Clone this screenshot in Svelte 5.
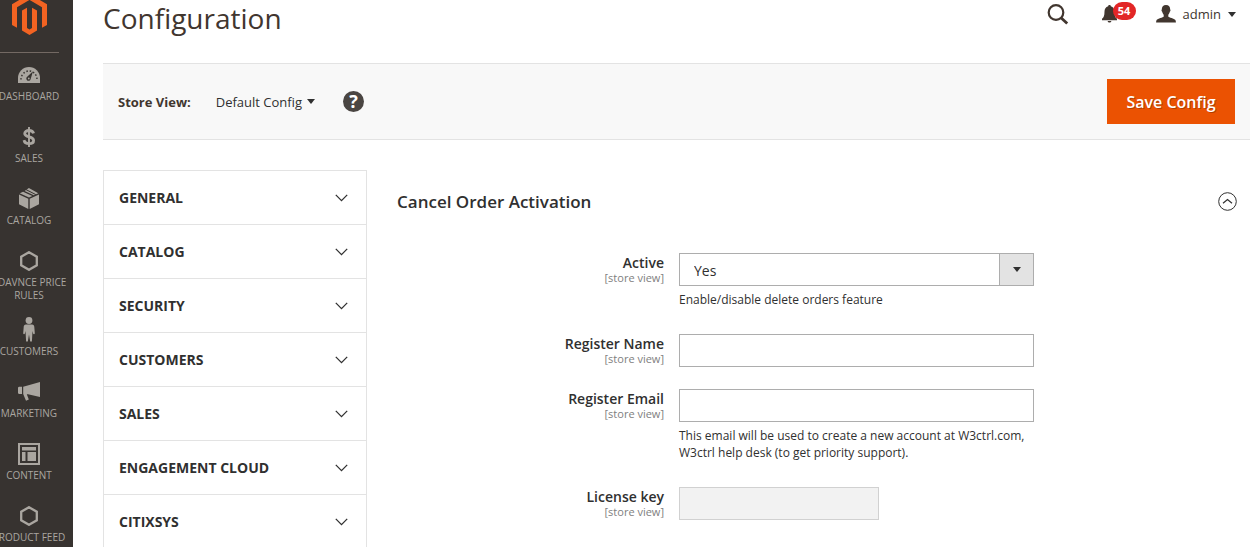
<script lang="ts">
	type MenuItem = { icon: string; label: string };

	const menu: MenuItem[] = [
		{ icon: 'dashboard', label: 'Dashboard' },
		{ icon: 'sales', label: 'Sales' },
		{ icon: 'catalog', label: 'Catalog' },
		{ icon: 'hexagon', label: 'Adavnce Price Rules' },
		{ icon: 'customers', label: 'Customers' },
		{ icon: 'marketing', label: 'Marketing' },
		{ icon: 'content', label: 'Content' },
		{ icon: 'hexagon', label: 'Product Feed' }
	];

	const sections = [
		'General',
		'Catalog',
		'Security',
		'Customers',
		'Sales',
		'Engagement Cloud',
		'Citixsys'
	];

	let active = $state('Yes');
	let registerName = $state('');
	let registerEmail = $state('');
	let isOpen = $state(true);
</script>

{#snippet scopeLabel(id: string, text: string)}
	<label for={id}>
		{text}
		<small>[store view]</small>
	</label>
{/snippet}

<div class="page">
	<aside class="sidebar">
		<a href="#home" class="logo" aria-label="Magento Admin Panel">
			<svg width="35" height="35" viewBox="0 6 35 35">
				<path d="M17.5 0 0 10.200V31l5 2.800V13.200L17.500 5.900 30 13.200V33.800L35 31V10.200z" />
				<path d="M10 16.500 15 13.700V34l2.500 1.500L20 34V13.700l5 2.800V36.600L17.500 41 10 36.600z" />
			</svg>
		</a>
		<nav>
			<ul class="menu">
				{#each menu as item}
					<li>
						<a href="#menu">
							<span class="menu-icon">
								{#if item.icon === 'dashboard'}
									<svg width="22" height="16" viewBox="0 0 22 16">
										<path fill="currentColor" d="M0 16v-5a11 11 0 0 1 22 0v5z" />
										<path
											fill="none"
											stroke="#373330"
											stroke-width="1.500"
											stroke-dasharray="1.500 1.900"
											d="M3 12.500a8 8.500 0 0 1 16 0"
										/>
										<path fill="#373330" d="m15 4.200-5.800 5.600a2.200 2.200 0 1 0 3.400 2.400z" />
										<circle cx="10.800" cy="11.500" r=".9" fill="currentColor" />
									</svg>
								{:else if item.icon === 'sales'}
									<svg width="14" height="20" viewBox="0 0 14 20">
										<path
											fill="none"
											stroke="currentColor"
											stroke-width="2.800"
											d="M11.600 6.400C11 4.400 9.300 3.500 7 3.500c-2.600 0-4.300 1.200-4.300 3.100 0 4.500 8.900 2.200 8.900 6.800 0 2-1.900 3.200-4.600 3.200-2.600 0-4.500-1.100-5-3.500"
										/>
										<path fill="none" stroke="currentColor" stroke-width="1.900" d="M7 0v20" />
									</svg>
								{:else if item.icon === 'catalog'}
									<svg width="20" height="21" viewBox="0 0 20 21" fill="currentColor">
										<path d="M0 6.500 9.300 10.800V21L0 16.200zM20 6.500 10.700 10.800V21L20 16.200z" />
										<path d="M.7 5.300 4.100 3.700 13.300 8 10 9.600zM5.600 3 9.900 0l9.400 5.300-4.500 2z" />
										<path d="m7 1.600 9.800 5" stroke="#373330" stroke-width="1" />
									</svg>
								{:else if item.icon === 'customers'}
									<svg width="12" height="25" viewBox="0 0 12 25" fill="currentColor">
										<circle cx="6" cy="3.500" r="3.400" />
										<path
											d="M3 7.600h6c1.600 0 2.200 1 2.300 2.500l.5 6.200c0 1-1.300 1.200-1.700.3L9.500 14 8.900 24.500H7.200L6 17.500l-1.200 7H3.100L2.500 14l-.6 2.600c-.4.9-1.700.7-1.700-.3l.5-6.200C.8 8.600 1.400 7.600 3 7.600z"
										/>
									</svg>
								{:else if item.icon === 'marketing'}
									<svg width="22" height="19" viewBox="0 0 22 19" fill="currentColor">
										<path
											d="M22 0v15L10 12.200l-1.200.1 2 5.200-2.800 1.200L5.200 12V4.800zM0 5.600l1-.9h3v7.400H1l-1-.9z"
										/>
									</svg>
								{:else if item.icon === 'content'}
									<svg width="22" height="22" viewBox="0 0 22 22" fill="currentColor">
										<path
											fill-rule="evenodd"
											d="M0 0h22v22H0zM2 2v18h18V2zM4 4h14v3.500H4zM4 9h3.500v9H4zM9.500 9H18v9H9.500z"
										/>
									</svg>
								{:else}
									<svg width="18" height="20" viewBox="0 0 18 20">
										<path
											fill="none"
											stroke="currentColor"
											stroke-width="2.300"
											d="m9 1.200 7.800 4.500v8.600L9 18.800l-7.800-4.500V5.700z"
										/>
									</svg>
								{/if}
							</span>
							<span>{item.label}</span>
						</a>
					</li>
				{/each}
			</ul>
		</nav>
	</aside>

	<main>
		<header>
			<h1>Configuration</h1>
			<div class="header-tools">
				<button class="search" aria-label="Search">
					<svg width="22" height="21" viewBox="0 0 22 21" fill="none" stroke="currentColor">
						<circle cx="9" cy="8.500" r="7.300" stroke-width="2.200" />
						<path stroke-width="2.800" d="m14 13.700 6.200 5.800" />
					</svg>
				</button>
				<button class="notifications" aria-label="Notifications">
					<svg width="15" height="18" viewBox="0 0 15 18" fill="currentColor">
						<path
							d="M7.500 0c.8 0 1.300.5 1.300 1.300 2.500.6 3.700 2.700 3.700 5.200 0 4.200.8 6.200 2.500 7.200v1.500H0v-1.500c1.700-1 2.500-3 2.500-7.200 0-2.500 1.200-4.600 3.700-5.200C6.200.5 6.700 0 7.500 0zM5.600 16h3.800c-.3 1-1 1.500-1.900 1.500S5.900 17 5.600 16z"
						/>
					</svg>
					<span class="counter">54</span>
				</button>
				<button class="account">
					<svg width="20" height="18" viewBox="0 0 20 18" fill="currentColor">
						<path
							d="M10 0c2.800 0 4.300 1.800 4.200 4.500.6.600.2 1.900-.4 2.200-.3 1.500-1 2.300-1.500 3v1.700c.5 1.200 6 1.800 7.100 3.500.4.700.5 1.800.5 2.700H.1c0-.9.1-2 .5-2.700 1.100-1.700 6.600-2.300 7.100-3.500V9.700c-.5-.7-1.200-1.500-1.500-3-.6-.3-1-1.600-.4-2.200C5.700 1.800 7.200 0 10 0z"
						/>
					</svg>
					<span>admin</span>
					<i class="caret"></i>
				</button>
			</div>
		</header>

		<div class="toolbar">
			<strong>Store View:</strong>
			<button class="store-switcher">Default Config <i class="caret"></i></button>
			<a href="#help" class="help" aria-label="What is this?">?</a>
			<button class="save">Save Config</button>
		</div>

		<div class="columns">
			<nav class="sections">
				{#each sections as section}
					<button>
						{section}
						<svg width="13" height="8" viewBox="0 0 13 8">
							<path fill="none" stroke="#303030" stroke-width="1.300" d="m.8.900 5.700 5.700L12.200.900" />
						</svg>
					</button>
				{/each}
			</nav>

			<section class="config">
				<div class="config-title">
					<h2>Cancel Order Activation</h2>
					<button
						aria-label="Toggle section"
						aria-expanded={isOpen}
						onclick={() => (isOpen = !isOpen)}
					>
						<svg width="19" height="19" viewBox="0 0 19 19" fill="none" stroke="#303030">
							<circle cx="9.500" cy="9.500" r="8.800" />
							<path d="m5 11.200 4.500-3.700 4.500 3.700" stroke-width="1.200" />
						</svg>
					</button>
				</div>

				{#if isOpen}
					<form>
						<div class="field">
							{@render scopeLabel('active', 'Active')}
							<div class="control">
								<div class="select">
									<select id="active" bind:value={active}>
										<option>Yes</option>
										<option>No</option>
									</select>
									<span class="select-arrow"><i class="caret"></i></span>
								</div>
								<p>Enable/disable delete orders feature</p>
							</div>
						</div>
						<div class="field">
							{@render scopeLabel('register-name', 'Register Name')}
							<div class="control">
								<input id="register-name" type="text" bind:value={registerName} />
							</div>
						</div>
						<div class="field">
							{@render scopeLabel('register-email', 'Register Email')}
							<div class="control">
								<input id="register-email" type="text" bind:value={registerEmail} />
								<p>
									This email will be used to create a new account at W3ctrl.com, W3ctrl help desk (to
									get priority support).
								</p>
							</div>
						</div>
						<div class="field">
							{@render scopeLabel('license-key', 'License key')}
							<div class="control">
								<input id="license-key" class="license" type="text" disabled />
							</div>
						</div>
					</form>
				{/if}
			</section>
		</div>
	</main>
</div>

<style>
	:global(body) {
		background: #fff;
		margin: 0;
	}

	.page {
		color: #303030;
		display: flex;
		font-family: 'Open Sans', 'Noto Sans', sans-serif;
		font-size: 14px;
		height: 100vh;
		overflow: hidden;
	}

	.page :global(*) {
		box-sizing: border-box;
	}

	svg {
		display: block;
		flex: none;
	}

	button {
		background: none;
		border: none;
		color: inherit;
		cursor: pointer;
		font: inherit;
		padding: 0;
	}

	/* the menu is scrolled a little to the left */
	.sidebar {
		background: #373330;
		flex: none;
		margin-left: -15px;
		width: 88px;
	}

	.logo {
		border-bottom: 1px solid #736963;
		display: flex;
		fill: #f26322;
		height: 53px;
		justify-content: center;
		margin: 0 14px;
	}

	.menu {
		list-style: none;
		margin: 0;
		padding: 0;
	}

	.menu a {
		align-items: center;
		color: #aaa6a0;
		display: flex;
		flex-direction: column;
		font-size: 10px;
		gap: 3px;
		line-height: 13px;
		min-height: 62px;
		padding: 9px 4px 6px;
		text-align: center;
		text-decoration: none;
		text-transform: uppercase;
	}

	.menu-icon {
		align-items: center;
		display: flex;
		height: 25px;
	}

	main {
		flex: 1;
		margin: 0 9px 0 30px;
		min-width: 0;
	}

	header {
		color: #41362f;
		display: flex;
		height: 63px;
		justify-content: space-between;
	}

	h1 {
		font-size: 28px;
		font-weight: 400;
		line-height: 36px;
		margin: 0;
	}

	.header-tools {
		align-items: center;
		display: flex;
		height: 28px;
		padding-right: 14px;
	}

	.notifications {
		display: flex;
		margin-left: 33px;
		position: relative;
	}

	.counter {
		background: #e22626;
		border-radius: 9px;
		color: #fff;
		font-size: 11px;
		font-weight: 700;
		height: 18px;
		left: 11px;
		line-height: 18px;
		position: absolute;
		top: -3px;
		width: 23px;
	}

	.account {
		align-items: center;
		display: flex;
		font-size: 13px;
		gap: 7px;
		margin-left: 39px;
	}

	.caret {
		border: 4px solid transparent;
		border-bottom: none;
		border-top: 5px solid #303030;
		display: block;
	}

	.toolbar {
		align-items: center;
		background: #f8f8f8;
		border-bottom: 1px solid #e3e3e3;
		border-top: 1px solid #e3e3e3;
		display: flex;
		font-size: 13px;
		padding: 15px;
	}

	.toolbar strong {
		color: #41362f;
	}

	.store-switcher {
		align-items: center;
		display: flex;
		gap: 5px;
		margin-left: 25px;
	}

	.help {
		background: #4a4542;
		border-radius: 50%;
		color: #fff;
		font-size: 18px;
		font-weight: 700;
		height: 21px;
		line-height: 21px;
		margin-left: 28px;
		text-align: center;
		text-decoration: none;
		width: 21px;
	}

	.save {
		background: #eb5202;
		color: #fff;
		font-size: 16px;
		font-weight: 600;
		height: 45px;
		margin-left: auto;
		min-width: 128px;
		padding: 0 17px;
		text-shadow: 1px 1px 0 rgba(0, 0, 0, 0.25);
	}

	.columns {
		display: flex;
		gap: 30px;
		padding-top: 30px;
	}

	.sections {
		border: 1px solid #e3e3e3;
		flex: 0 0 264px;
	}

	.sections button {
		align-items: center;
		border-bottom: 1px solid #e3e3e3;
		display: flex;
		font-weight: 700;
		height: 54px;
		justify-content: space-between;
		padding: 0 18px 0 15px;
		text-transform: uppercase;
		width: 100%;
	}

	.config {
		flex: 1;
		min-width: 0;
		padding-right: 13px;
		padding-top: 20px;
	}

	.config-title {
		align-items: center;
		display: flex;
		justify-content: space-between;
	}

	h2 {
		font-size: 17px;
		font-weight: 600;
		line-height: 23px;
		margin: 0;
	}

	form {
		display: flex;
		flex-direction: column;
		gap: 22px;
		padding-top: 40px;
	}

	.field {
		display: grid;
		grid-template-columns: 267fr 370fr 203fr;
	}

	label {
		font-weight: 600;
		line-height: 18px;
		padding-top: 1px;
		text-align: right;
	}

	label small {
		color: #808080;
		display: block;
		font-size: 11px;
		font-weight: 400;
		line-height: 12px;
	}

	.control {
		padding-left: 15px;
	}

	.control p {
		font-size: 12px;
		line-height: 17px;
		margin: 5px 0 4px;
	}

	input,
	select {
		appearance: none;
		background: #fff;
		border: 1px solid #adadad;
		border-radius: 0;
		color: #303030;
		display: block;
		font: inherit;
		height: 33px;
		padding: 2px 14px 0;
		width: 100%;
	}

	input:disabled {
		background: #f2f2f2;
		border-color: #d1d1d1;
	}

	.license {
		max-width: 200px;
	}

	.select {
		position: relative;
	}

	.select-arrow {
		align-items: center;
		background: #e3e3e3;
		border: 1px solid #adadad;
		bottom: 0;
		display: flex;
		justify-content: center;
		pointer-events: none;
		position: absolute;
		right: 0;
		top: 0;
		width: 35px;
	}
</style>
